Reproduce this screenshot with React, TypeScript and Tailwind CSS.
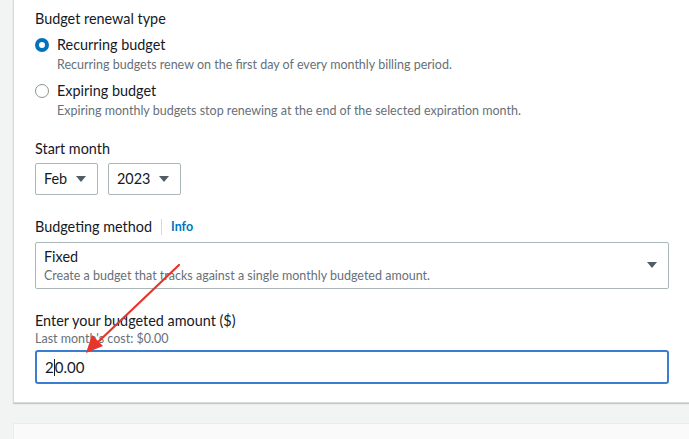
function Caret({ className = "" }: { className?: string }) {
  return (
    <svg width="12" height="8" viewBox="0 0 12 8" className={className}>
      <path d="M1 1 L11 1 L6 7 Z" fill="#545b64" />
    </svg>
  );
}

function Radio({ checked, label, desc }: { checked: boolean; label: string; desc: string }) {
  return (
    <div className="flex gap-[8px]">
      <div className="pt-[3px]">
        {checked ? (
          <div className="w-[14px] h-[14px] rounded-full border-[4px] border-[#0073bb] bg-white" />
        ) : (
          <div className="w-[14px] h-[14px] rounded-full border border-[#879596] bg-white" />
        )}
      </div>
      <div>
        <div className="text-[14.4px] leading-[20px] text-[#16191f]">{label}</div>
        <div className="text-[12.5px] leading-[16px] text-[#687078] mt-[2px]">{desc}</div>
      </div>
    </div>
  );
}

export default function App() {
  return (
    <div
      className="w-[689px] h-[439px] overflow-hidden bg-[#f2f3f3] relative"
      style={{ fontFamily: "Lato, 'Open Sans', sans-serif" }}
    >
      {/* Tarjeta principal */}
      <div className="ml-[13px] w-[700px] h-[403px] bg-white border-l border-b border-[#d5dbdb] shadow-[0_1px_1px_rgba(0,28,36,0.2)] pl-[21px] pt-[9px]">
        <div className="text-[14.4px] leading-[20px] text-[#16191f]">Budget renewal type</div>

        <div className="mt-[6px] flex flex-col gap-[8px]">
          <Radio
            checked
            label="Recurring budget"
            desc="Recurring budgets renew on the first day of every monthly billing period."
          />
          <Radio
            checked={false}
            label="Expiring budget"
            desc="Expiring monthly budgets stop renewing at the end of the selected expiration month."
          />
        </div>

        <div className="mt-[20px] text-[14.4px] leading-[20px] text-[#16191f]">Start month</div>
        <div className="mt-[4px] flex gap-[10px]">
          <div className="w-[63px] h-[32px] border border-[#aab7b8] rounded-[2px] flex items-center justify-between pl-[8px] pr-[10px] text-[14.4px] text-[#16191f]">
            <span>Feb</span>
            <Caret />
          </div>
          <div className="w-[73px] h-[32px] border border-[#aab7b8] rounded-[2px] flex items-center justify-between pl-[8px] pr-[10px] text-[14.4px] text-[#16191f]">
            <span>2023</span>
            <Caret />
          </div>
        </div>

        <div className="mt-[22px] flex items-center text-[14.4px] leading-[20px]">
          <span className="text-[#16191f]">Budgeting method</span>
          <span className="mx-[9px] h-[16px] border-l border-[#d5dbdb]" />
          <span className="text-[#0073bb] font-bold text-[12.5px]">Info</span>
        </div>

        <div className="mt-[5px] w-[634px] h-[47px] border border-[#aab7b8] rounded-[2px] flex items-center justify-between pl-[8px] pr-[10px]">
          <div>
            <div className="text-[14.4px] leading-[18px] text-[#16191f]">Fixed</div>
            <div className="text-[12.5px] leading-[16px] text-[#687078] mt-[2px]">
              Create a budget that tracks against a single monthly budgeted amount.
            </div>
          </div>
          <Caret className="mb-[2px]" />
        </div>

        <div className="mt-[22px] text-[14.4px] leading-[20px] text-[#16191f]">Enter your budgeted amount ($)</div>
        <div className="text-[12.5px] leading-[16px] text-[#687078]">Last month's cost: $0.00</div>
        <div className="mt-[3px] w-[634px] h-[34px] border-2 border-[#3b7dd0] rounded-[3px] pl-[8px] flex items-center text-[15px] text-[#16191f]">
          <span>2</span>
          <span className="w-px h-[17px] bg-[#16191f]" />
          <span>0.00</span>
        </div>
      </div>

      {/* Siguiente tarjeta */}
      <div className="ml-[13px] mt-[20px] w-[700px] h-[40px] bg-[#fafafa] border-l border-t border-[#eaeded]" />

      {/* Flecha roja de anotación */}
      <svg className="absolute left-0 top-0 pointer-events-none" width="689" height="439">
        <line x1="179" y1="265" x2="97" y2="343" stroke="#e8352a" strokeWidth="2.2" strokeLinecap="round" />
        <path d="M86 353 L92 335 L103 346 Z" fill="#e8352a" />
      </svg>
    </div>
  );
}
